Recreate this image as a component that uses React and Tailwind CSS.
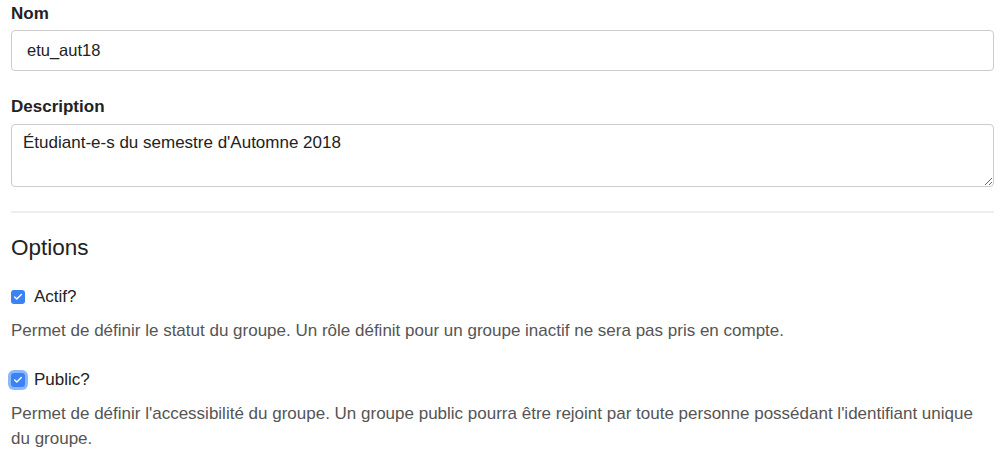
import { Check } from "lucide-react";

function Box({ focused }) {
  return (
    <span
      className={
        "flex h-[14px] w-[14px] shrink-0 items-center justify-center rounded-[3px] bg-[#3b82f6] " +
        (focused ? "ring-[3px] ring-[#8db8f7]" : "")
      }
    >
      <Check className="h-[10px] w-[10px] text-white" strokeWidth={3.5} />
    </span>
  );
}

function Option({ label, help, focused, className }) {
  return (
    <div className={className}>
      <label className="flex h-[20px] items-center gap-[9px] pl-[11px] text-[17px] text-[#222]">
        <Box focused={focused} />
        <span>{label}</span>
      </label>
      <p className="mt-[11px] px-[11px] text-[17px] leading-[25px] text-[#555]">{help}</p>
    </div>
  );
}

export default function App() {
  return (
    <div className="w-[1000px] h-[458px] overflow-hidden bg-white pr-[6px] font-['Liberation_Sans',Arial,sans-serif]">
      <div className="pt-[4px]">
        <label className="block pl-[11px] text-[17px] font-bold leading-[20px] text-[#222]">Nom</label>
        <input
          defaultValue="etu_aut18"
          className="mt-[6px] ml-[11px] block h-[41px] w-[983px] rounded-[4px] border border-[#ccc] px-[15px] text-[16.5px] text-[#222] outline-none"
        />
      </div>
      <div className="mt-[26px]">
        <label className="block pl-[11px] text-[17px] font-bold leading-[20px] text-[#222]">Description</label>
        <textarea
          defaultValue="Étudiant-e-s du semestre d'Automne 2018"
          className="mt-[7px] ml-[11px] block h-[63px] w-[983px] resize-y rounded-[4px] border border-[#ccc] px-[11px] pt-[8px] text-[17px] leading-[20px] text-[#222] outline-none"
        />
      </div>
      <hr className="mt-[24px] ml-[11px] w-[983px] border-t-2 border-[#eee]" />
      <h3 className="mt-[21px] pl-[11px] text-[22.5px] leading-[28px] text-[#222]">Options</h3>
      <Option
        className="mt-[25px]"
        label="Actif?"
        help="Permet de définir le statut du groupe. Un rôle définit pour un groupe inactif ne sera pas pris en compte."
      />
      <Option
        className="mt-[27px]"
        focused
        label="Public?"
        help="Permet de définir l'accessibilité du groupe. Un groupe public pourra être rejoint par toute personne possédant l'identifiant unique du groupe."
      />
    </div>
  );
}
